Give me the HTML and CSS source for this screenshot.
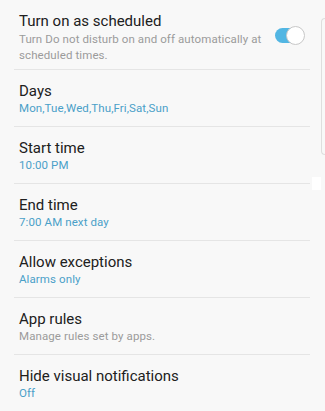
FILE: index.html
```html
<!DOCTYPE html>
<html>
<head>
<meta charset="utf-8">
<link rel="stylesheet" href="styles.css">
</head>
<body>
<div class="list">
  <div class="row row-first">
    <div class="text">
      <div class="title">Turn on as scheduled</div>
      <div class="sub grey">Turn Do not disturb on and off automatically at scheduled times.</div>
    </div>
    <div class="switch"><div class="thumb"></div></div>
  </div>
  <div class="row">
    <div class="text">
      <div class="title">Days</div>
      <div class="sub blue">Mon,Tue,Wed,Thu,Fri,Sat,Sun</div>
    </div>
  </div>
  <div class="row">
    <div class="text">
      <div class="title">Start time</div>
      <div class="sub blue">10:00 PM</div>
    </div>
  </div>
  <div class="row">
    <div class="text">
      <div class="title">End time</div>
      <div class="sub blue">7:00 AM next day</div>
    </div>
  </div>
  <div class="row">
    <div class="text">
      <div class="title">Allow exceptions</div>
      <div class="sub blue">Alarms only</div>
    </div>
  </div>
  <div class="row">
    <div class="text">
      <div class="title">App rules</div>
      <div class="sub grey">Manage rules set by apps.</div>
    </div>
  </div>
  <div class="row">
    <div class="text">
      <div class="title">Hide visual notifications</div>
      <div class="sub blue">Off</div>
    </div>
  </div>
</div>
<div class="edge-handle"></div>
<div class="edge-dot"></div>
</body>
</html>
```
FILE: styles.css
```css
html, body {
  margin: 0;
  padding: 0;
  background: #f8f8f8;
  height: 100%;
  overflow: hidden;
}
body {
  font-family: Roboto, "Liberation Sans", sans-serif;
  position: relative;
}
.list {
  display: flex;
  flex-direction: column;
}
.row {
  display: flex;
  align-items: center;
  margin: 0 15px 0 14px;
  padding: 11px 0 10px 5px;
  border-bottom: 1px solid #e5e5e5;
}
.row-first {
  padding-bottom: 6px;
}
.text {
  flex: 1;
  min-width: 0;
}
.title {
  font-size: 15px;
  line-height: 20px;
  color: #202020;
}
.sub {
  font-size: 11.5px;
  line-height: 15px;
  letter-spacing: 0.1px;
}
.grey { color: #9b9b9b; }
.blue { color: #4aa0c8; }
.row-first .sub {
  line-height: 16px;
}
.switch {
  position: relative;
  width: 29px;
  height: 15px;
  border-radius: 8px;
  background: #52b6e3;
  margin-right: 6px;
  margin-left: 4px;
  flex: none;
  margin-bottom: 4px;
}
.thumb {
  position: absolute;
  right: -1px;
  top: -2px;
  width: 17px;
  height: 17px;
  border-radius: 50%;
  background: #ffffff;
  border: 1px solid #c8c8c8;
  box-sizing: content-box;
}
.edge-handle {
  position: absolute;
  left: 321px;
  top: 18px;
  width: 3px;
  height: 135px;
  border: 1px solid #dedede;
  border-right: none;
  border-radius: 5px 0 0 5px;
}
.edge-dot {
  position: absolute;
  left: 312px;
  top: 177px;
  width: 9px;
  height: 13px;
  background: #ffffff;
}
```
